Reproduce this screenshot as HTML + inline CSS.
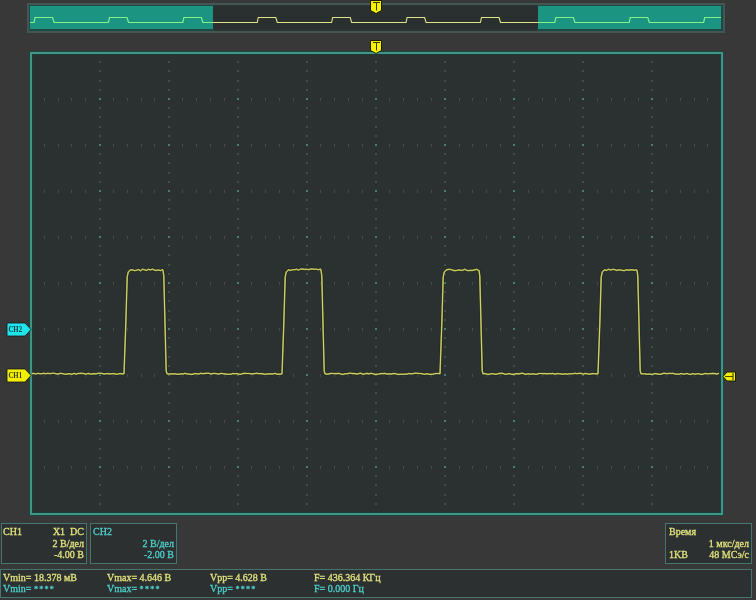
<!DOCTYPE html>
<html><head><meta charset="utf-8"><style>html,body{margin:0;padding:0;background:#393838;width:756px;height:600px;overflow:hidden}svg{display:block;will-change:transform}</style></head>
<body><svg width="756" height="600" viewBox="0 0 756 600" font-family="Liberation Sans, sans-serif"><rect x="0" y="0" width="756" height="600" fill="#393838"/><rect x="27" y="3" width="698" height="30" fill="#445654"/><rect x="29" y="5" width="694" height="26" fill="#2b3434"/><rect x="29" y="5" width="185" height="26" fill="#1d4a45"/><rect x="537" y="5" width="186" height="26" fill="#1d4a45"/><rect x="30" y="6" width="691" height="23" fill="#2a2f2f"/><rect x="30" y="6" width="183" height="23" fill="#1b9482"/><rect x="538" y="6" width="183" height="23" fill="#1b9482"/><clipPath id="cl"><rect x="30" y="6" width="183" height="23"/><rect x="538" y="6" width="183" height="23"/></clipPath><clipPath id="cm"><rect x="213" y="6" width="325" height="23"/></clipPath><path d="M30.0,22.5 L34.0,22.5 L35.1,17.5 L52.6,17.5 L54.1,22.5 L108.4,22.5 L109.5,17.5 L127.0,17.5 L128.5,22.5 L182.8,22.5 L183.9,17.5 L201.4,17.5 L202.9,22.5 L257.2,22.5 L258.3,17.5 L275.8,17.5 L277.3,22.5 L331.6,22.5 L332.7,17.5 L350.2,17.5 L351.7,22.5 L406.0,22.5 L407.1,17.5 L424.6,17.5 L426.1,22.5 L480.4,22.5 L481.5,17.5 L499.0,17.5 L500.5,22.5 L554.8,22.5 L555.9,17.5 L573.4,17.5 L574.9,22.5 L629.2,22.5 L630.3,17.5 L647.8,17.5 L649.3,22.5 L703.6,22.5 L704.7,17.5 L721.0,17.5" fill="none" stroke="#86f08a" stroke-width="1.2" clip-path="url(#cl)"/><path d="M30.0,22.5 L34.0,22.5 L35.1,17.5 L52.6,17.5 L54.1,22.5 L108.4,22.5 L109.5,17.5 L127.0,17.5 L128.5,22.5 L182.8,22.5 L183.9,17.5 L201.4,17.5 L202.9,22.5 L257.2,22.5 L258.3,17.5 L275.8,17.5 L277.3,22.5 L331.6,22.5 L332.7,17.5 L350.2,17.5 L351.7,22.5 L406.0,22.5 L407.1,17.5 L424.6,17.5 L426.1,22.5 L480.4,22.5 L481.5,17.5 L499.0,17.5 L500.5,22.5 L554.8,22.5 L555.9,17.5 L573.4,17.5 L574.9,22.5 L629.2,22.5 L630.3,17.5 L647.8,17.5 L649.3,22.5 L703.6,22.5 L704.7,17.5 L721.0,17.5" fill="none" stroke="#e4e48a" stroke-width="1.1" clip-path="url(#cm)"/><rect x="31" y="53" width="691" height="461" fill="#2b3030" stroke="#3f9686" stroke-width="2"/><rect x="29.5" y="51.5" width="694" height="464" fill="none" stroke="#1e4440" stroke-width="1"/><rect x="32.5" y="54.5" width="688" height="458" fill="none" stroke="#1d3c38" stroke-width="1"/><g fill="#434c4c"><rect x="99" y="61" width="2" height="2"/><rect x="99" y="70" width="2" height="2"/><rect x="99" y="80" width="2" height="2"/><rect x="99" y="89" width="2" height="2"/><rect x="99" y="98" width="2" height="2"/><rect x="99" y="107" width="2" height="2"/><rect x="99" y="116" width="2" height="2"/><rect x="99" y="126" width="2" height="2"/><rect x="99" y="135" width="2" height="2"/><rect x="99" y="144" width="2" height="2"/><rect x="99" y="153" width="2" height="2"/><rect x="99" y="162" width="2" height="2"/><rect x="99" y="172" width="2" height="2"/><rect x="99" y="181" width="2" height="2"/><rect x="99" y="190" width="2" height="2"/><rect x="99" y="199" width="2" height="2"/><rect x="99" y="208" width="2" height="2"/><rect x="99" y="218" width="2" height="2"/><rect x="99" y="227" width="2" height="2"/><rect x="99" y="236" width="2" height="2"/><rect x="99" y="245" width="2" height="2"/><rect x="99" y="254" width="2" height="2"/><rect x="99" y="264" width="2" height="2"/><rect x="99" y="273" width="2" height="2"/><rect x="99" y="282" width="2" height="2"/><rect x="99" y="291" width="2" height="2"/><rect x="99" y="300" width="2" height="2"/><rect x="99" y="310" width="2" height="2"/><rect x="99" y="319" width="2" height="2"/><rect x="99" y="328" width="2" height="2"/><rect x="99" y="337" width="2" height="2"/><rect x="99" y="346" width="2" height="2"/><rect x="99" y="356" width="2" height="2"/><rect x="99" y="365" width="2" height="2"/><rect x="99" y="374" width="2" height="2"/><rect x="99" y="383" width="2" height="2"/><rect x="99" y="392" width="2" height="2"/><rect x="99" y="402" width="2" height="2"/><rect x="99" y="411" width="2" height="2"/><rect x="99" y="420" width="2" height="2"/><rect x="99" y="429" width="2" height="2"/><rect x="99" y="438" width="2" height="2"/><rect x="99" y="448" width="2" height="2"/><rect x="99" y="457" width="2" height="2"/><rect x="99" y="466" width="2" height="2"/><rect x="99" y="475" width="2" height="2"/><rect x="99" y="484" width="2" height="2"/><rect x="99" y="494" width="2" height="2"/><rect x="99" y="503" width="2" height="2"/><rect x="168" y="61" width="2" height="2"/><rect x="168" y="70" width="2" height="2"/><rect x="168" y="80" width="2" height="2"/><rect x="168" y="89" width="2" height="2"/><rect x="168" y="98" width="2" height="2"/><rect x="168" y="107" width="2" height="2"/><rect x="168" y="116" width="2" height="2"/><rect x="168" y="126" width="2" height="2"/><rect x="168" y="135" width="2" height="2"/><rect x="168" y="144" width="2" height="2"/><rect x="168" y="153" width="2" height="2"/><rect x="168" y="162" width="2" height="2"/><rect x="168" y="172" width="2" height="2"/><rect x="168" y="181" width="2" height="2"/><rect x="168" y="190" width="2" height="2"/><rect x="168" y="199" width="2" height="2"/><rect x="168" y="208" width="2" height="2"/><rect x="168" y="218" width="2" height="2"/><rect x="168" y="227" width="2" height="2"/><rect x="168" y="236" width="2" height="2"/><rect x="168" y="245" width="2" height="2"/><rect x="168" y="254" width="2" height="2"/><rect x="168" y="264" width="2" height="2"/><rect x="168" y="273" width="2" height="2"/><rect x="168" y="282" width="2" height="2"/><rect x="168" y="291" width="2" height="2"/><rect x="168" y="300" width="2" height="2"/><rect x="168" y="310" width="2" height="2"/><rect x="168" y="319" width="2" height="2"/><rect x="168" y="328" width="2" height="2"/><rect x="168" y="337" width="2" height="2"/><rect x="168" y="346" width="2" height="2"/><rect x="168" y="356" width="2" height="2"/><rect x="168" y="365" width="2" height="2"/><rect x="168" y="374" width="2" height="2"/><rect x="168" y="383" width="2" height="2"/><rect x="168" y="392" width="2" height="2"/><rect x="168" y="402" width="2" height="2"/><rect x="168" y="411" width="2" height="2"/><rect x="168" y="420" width="2" height="2"/><rect x="168" y="429" width="2" height="2"/><rect x="168" y="438" width="2" height="2"/><rect x="168" y="448" width="2" height="2"/><rect x="168" y="457" width="2" height="2"/><rect x="168" y="466" width="2" height="2"/><rect x="168" y="475" width="2" height="2"/><rect x="168" y="484" width="2" height="2"/><rect x="168" y="494" width="2" height="2"/><rect x="168" y="503" width="2" height="2"/><rect x="237" y="61" width="2" height="2"/><rect x="237" y="70" width="2" height="2"/><rect x="237" y="80" width="2" height="2"/><rect x="237" y="89" width="2" height="2"/><rect x="237" y="98" width="2" height="2"/><rect x="237" y="107" width="2" height="2"/><rect x="237" y="116" width="2" height="2"/><rect x="237" y="126" width="2" height="2"/><rect x="237" y="135" width="2" height="2"/><rect x="237" y="144" width="2" height="2"/><rect x="237" y="153" width="2" height="2"/><rect x="237" y="162" width="2" height="2"/><rect x="237" y="172" width="2" height="2"/><rect x="237" y="181" width="2" height="2"/><rect x="237" y="190" width="2" height="2"/><rect x="237" y="199" width="2" height="2"/><rect x="237" y="208" width="2" height="2"/><rect x="237" y="218" width="2" height="2"/><rect x="237" y="227" width="2" height="2"/><rect x="237" y="236" width="2" height="2"/><rect x="237" y="245" width="2" height="2"/><rect x="237" y="254" width="2" height="2"/><rect x="237" y="264" width="2" height="2"/><rect x="237" y="273" width="2" height="2"/><rect x="237" y="282" width="2" height="2"/><rect x="237" y="291" width="2" height="2"/><rect x="237" y="300" width="2" height="2"/><rect x="237" y="310" width="2" height="2"/><rect x="237" y="319" width="2" height="2"/><rect x="237" y="328" width="2" height="2"/><rect x="237" y="337" width="2" height="2"/><rect x="237" y="346" width="2" height="2"/><rect x="237" y="356" width="2" height="2"/><rect x="237" y="365" width="2" height="2"/><rect x="237" y="374" width="2" height="2"/><rect x="237" y="383" width="2" height="2"/><rect x="237" y="392" width="2" height="2"/><rect x="237" y="402" width="2" height="2"/><rect x="237" y="411" width="2" height="2"/><rect x="237" y="420" width="2" height="2"/><rect x="237" y="429" width="2" height="2"/><rect x="237" y="438" width="2" height="2"/><rect x="237" y="448" width="2" height="2"/><rect x="237" y="457" width="2" height="2"/><rect x="237" y="466" width="2" height="2"/><rect x="237" y="475" width="2" height="2"/><rect x="237" y="484" width="2" height="2"/><rect x="237" y="494" width="2" height="2"/><rect x="237" y="503" width="2" height="2"/><rect x="306" y="61" width="2" height="2"/><rect x="306" y="70" width="2" height="2"/><rect x="306" y="80" width="2" height="2"/><rect x="306" y="89" width="2" height="2"/><rect x="306" y="98" width="2" height="2"/><rect x="306" y="107" width="2" height="2"/><rect x="306" y="116" width="2" height="2"/><rect x="306" y="126" width="2" height="2"/><rect x="306" y="135" width="2" height="2"/><rect x="306" y="144" width="2" height="2"/><rect x="306" y="153" width="2" height="2"/><rect x="306" y="162" width="2" height="2"/><rect x="306" y="172" width="2" height="2"/><rect x="306" y="181" width="2" height="2"/><rect x="306" y="190" width="2" height="2"/><rect x="306" y="199" width="2" height="2"/><rect x="306" y="208" width="2" height="2"/><rect x="306" y="218" width="2" height="2"/><rect x="306" y="227" width="2" height="2"/><rect x="306" y="236" width="2" height="2"/><rect x="306" y="245" width="2" height="2"/><rect x="306" y="254" width="2" height="2"/><rect x="306" y="264" width="2" height="2"/><rect x="306" y="273" width="2" height="2"/><rect x="306" y="282" width="2" height="2"/><rect x="306" y="291" width="2" height="2"/><rect x="306" y="300" width="2" height="2"/><rect x="306" y="310" width="2" height="2"/><rect x="306" y="319" width="2" height="2"/><rect x="306" y="328" width="2" height="2"/><rect x="306" y="337" width="2" height="2"/><rect x="306" y="346" width="2" height="2"/><rect x="306" y="356" width="2" height="2"/><rect x="306" y="365" width="2" height="2"/><rect x="306" y="374" width="2" height="2"/><rect x="306" y="383" width="2" height="2"/><rect x="306" y="392" width="2" height="2"/><rect x="306" y="402" width="2" height="2"/><rect x="306" y="411" width="2" height="2"/><rect x="306" y="420" width="2" height="2"/><rect x="306" y="429" width="2" height="2"/><rect x="306" y="438" width="2" height="2"/><rect x="306" y="448" width="2" height="2"/><rect x="306" y="457" width="2" height="2"/><rect x="306" y="466" width="2" height="2"/><rect x="306" y="475" width="2" height="2"/><rect x="306" y="484" width="2" height="2"/><rect x="306" y="494" width="2" height="2"/><rect x="306" y="503" width="2" height="2"/><rect x="375" y="61" width="2" height="2"/><rect x="375" y="70" width="2" height="2"/><rect x="375" y="80" width="2" height="2"/><rect x="375" y="89" width="2" height="2"/><rect x="375" y="98" width="2" height="2"/><rect x="375" y="107" width="2" height="2"/><rect x="375" y="116" width="2" height="2"/><rect x="375" y="126" width="2" height="2"/><rect x="375" y="135" width="2" height="2"/><rect x="375" y="144" width="2" height="2"/><rect x="375" y="153" width="2" height="2"/><rect x="375" y="162" width="2" height="2"/><rect x="375" y="172" width="2" height="2"/><rect x="375" y="181" width="2" height="2"/><rect x="375" y="190" width="2" height="2"/><rect x="375" y="199" width="2" height="2"/><rect x="375" y="208" width="2" height="2"/><rect x="375" y="218" width="2" height="2"/><rect x="375" y="227" width="2" height="2"/><rect x="375" y="236" width="2" height="2"/><rect x="375" y="245" width="2" height="2"/><rect x="375" y="254" width="2" height="2"/><rect x="375" y="264" width="2" height="2"/><rect x="375" y="273" width="2" height="2"/><rect x="375" y="282" width="2" height="2"/><rect x="375" y="291" width="2" height="2"/><rect x="375" y="300" width="2" height="2"/><rect x="375" y="310" width="2" height="2"/><rect x="375" y="319" width="2" height="2"/><rect x="375" y="328" width="2" height="2"/><rect x="375" y="337" width="2" height="2"/><rect x="375" y="346" width="2" height="2"/><rect x="375" y="356" width="2" height="2"/><rect x="375" y="365" width="2" height="2"/><rect x="375" y="374" width="2" height="2"/><rect x="375" y="383" width="2" height="2"/><rect x="375" y="392" width="2" height="2"/><rect x="375" y="402" width="2" height="2"/><rect x="375" y="411" width="2" height="2"/><rect x="375" y="420" width="2" height="2"/><rect x="375" y="429" width="2" height="2"/><rect x="375" y="438" width="2" height="2"/><rect x="375" y="448" width="2" height="2"/><rect x="375" y="457" width="2" height="2"/><rect x="375" y="466" width="2" height="2"/><rect x="375" y="475" width="2" height="2"/><rect x="375" y="484" width="2" height="2"/><rect x="375" y="494" width="2" height="2"/><rect x="375" y="503" width="2" height="2"/><rect x="444" y="61" width="2" height="2"/><rect x="444" y="70" width="2" height="2"/><rect x="444" y="80" width="2" height="2"/><rect x="444" y="89" width="2" height="2"/><rect x="444" y="98" width="2" height="2"/><rect x="444" y="107" width="2" height="2"/><rect x="444" y="116" width="2" height="2"/><rect x="444" y="126" width="2" height="2"/><rect x="444" y="135" width="2" height="2"/><rect x="444" y="144" width="2" height="2"/><rect x="444" y="153" width="2" height="2"/><rect x="444" y="162" width="2" height="2"/><rect x="444" y="172" width="2" height="2"/><rect x="444" y="181" width="2" height="2"/><rect x="444" y="190" width="2" height="2"/><rect x="444" y="199" width="2" height="2"/><rect x="444" y="208" width="2" height="2"/><rect x="444" y="218" width="2" height="2"/><rect x="444" y="227" width="2" height="2"/><rect x="444" y="236" width="2" height="2"/><rect x="444" y="245" width="2" height="2"/><rect x="444" y="254" width="2" height="2"/><rect x="444" y="264" width="2" height="2"/><rect x="444" y="273" width="2" height="2"/><rect x="444" y="282" width="2" height="2"/><rect x="444" y="291" width="2" height="2"/><rect x="444" y="300" width="2" height="2"/><rect x="444" y="310" width="2" height="2"/><rect x="444" y="319" width="2" height="2"/><rect x="444" y="328" width="2" height="2"/><rect x="444" y="337" width="2" height="2"/><rect x="444" y="346" width="2" height="2"/><rect x="444" y="356" width="2" height="2"/><rect x="444" y="365" width="2" height="2"/><rect x="444" y="374" width="2" height="2"/><rect x="444" y="383" width="2" height="2"/><rect x="444" y="392" width="2" height="2"/><rect x="444" y="402" width="2" height="2"/><rect x="444" y="411" width="2" height="2"/><rect x="444" y="420" width="2" height="2"/><rect x="444" y="429" width="2" height="2"/><rect x="444" y="438" width="2" height="2"/><rect x="444" y="448" width="2" height="2"/><rect x="444" y="457" width="2" height="2"/><rect x="444" y="466" width="2" height="2"/><rect x="444" y="475" width="2" height="2"/><rect x="444" y="484" width="2" height="2"/><rect x="444" y="494" width="2" height="2"/><rect x="444" y="503" width="2" height="2"/><rect x="513" y="61" width="2" height="2"/><rect x="513" y="70" width="2" height="2"/><rect x="513" y="80" width="2" height="2"/><rect x="513" y="89" width="2" height="2"/><rect x="513" y="98" width="2" height="2"/><rect x="513" y="107" width="2" height="2"/><rect x="513" y="116" width="2" height="2"/><rect x="513" y="126" width="2" height="2"/><rect x="513" y="135" width="2" height="2"/><rect x="513" y="144" width="2" height="2"/><rect x="513" y="153" width="2" height="2"/><rect x="513" y="162" width="2" height="2"/><rect x="513" y="172" width="2" height="2"/><rect x="513" y="181" width="2" height="2"/><rect x="513" y="190" width="2" height="2"/><rect x="513" y="199" width="2" height="2"/><rect x="513" y="208" width="2" height="2"/><rect x="513" y="218" width="2" height="2"/><rect x="513" y="227" width="2" height="2"/><rect x="513" y="236" width="2" height="2"/><rect x="513" y="245" width="2" height="2"/><rect x="513" y="254" width="2" height="2"/><rect x="513" y="264" width="2" height="2"/><rect x="513" y="273" width="2" height="2"/><rect x="513" y="282" width="2" height="2"/><rect x="513" y="291" width="2" height="2"/><rect x="513" y="300" width="2" height="2"/><rect x="513" y="310" width="2" height="2"/><rect x="513" y="319" width="2" height="2"/><rect x="513" y="328" width="2" height="2"/><rect x="513" y="337" width="2" height="2"/><rect x="513" y="346" width="2" height="2"/><rect x="513" y="356" width="2" height="2"/><rect x="513" y="365" width="2" height="2"/><rect x="513" y="374" width="2" height="2"/><rect x="513" y="383" width="2" height="2"/><rect x="513" y="392" width="2" height="2"/><rect x="513" y="402" width="2" height="2"/><rect x="513" y="411" width="2" height="2"/><rect x="513" y="420" width="2" height="2"/><rect x="513" y="429" width="2" height="2"/><rect x="513" y="438" width="2" height="2"/><rect x="513" y="448" width="2" height="2"/><rect x="513" y="457" width="2" height="2"/><rect x="513" y="466" width="2" height="2"/><rect x="513" y="475" width="2" height="2"/><rect x="513" y="484" width="2" height="2"/><rect x="513" y="494" width="2" height="2"/><rect x="513" y="503" width="2" height="2"/><rect x="582" y="61" width="2" height="2"/><rect x="582" y="70" width="2" height="2"/><rect x="582" y="80" width="2" height="2"/><rect x="582" y="89" width="2" height="2"/><rect x="582" y="98" width="2" height="2"/><rect x="582" y="107" width="2" height="2"/><rect x="582" y="116" width="2" height="2"/><rect x="582" y="126" width="2" height="2"/><rect x="582" y="135" width="2" height="2"/><rect x="582" y="144" width="2" height="2"/><rect x="582" y="153" width="2" height="2"/><rect x="582" y="162" width="2" height="2"/><rect x="582" y="172" width="2" height="2"/><rect x="582" y="181" width="2" height="2"/><rect x="582" y="190" width="2" height="2"/><rect x="582" y="199" width="2" height="2"/><rect x="582" y="208" width="2" height="2"/><rect x="582" y="218" width="2" height="2"/><rect x="582" y="227" width="2" height="2"/><rect x="582" y="236" width="2" height="2"/><rect x="582" y="245" width="2" height="2"/><rect x="582" y="254" width="2" height="2"/><rect x="582" y="264" width="2" height="2"/><rect x="582" y="273" width="2" height="2"/><rect x="582" y="282" width="2" height="2"/><rect x="582" y="291" width="2" height="2"/><rect x="582" y="300" width="2" height="2"/><rect x="582" y="310" width="2" height="2"/><rect x="582" y="319" width="2" height="2"/><rect x="582" y="328" width="2" height="2"/><rect x="582" y="337" width="2" height="2"/><rect x="582" y="346" width="2" height="2"/><rect x="582" y="356" width="2" height="2"/><rect x="582" y="365" width="2" height="2"/><rect x="582" y="374" width="2" height="2"/><rect x="582" y="383" width="2" height="2"/><rect x="582" y="392" width="2" height="2"/><rect x="582" y="402" width="2" height="2"/><rect x="582" y="411" width="2" height="2"/><rect x="582" y="420" width="2" height="2"/><rect x="582" y="429" width="2" height="2"/><rect x="582" y="438" width="2" height="2"/><rect x="582" y="448" width="2" height="2"/><rect x="582" y="457" width="2" height="2"/><rect x="582" y="466" width="2" height="2"/><rect x="582" y="475" width="2" height="2"/><rect x="582" y="484" width="2" height="2"/><rect x="582" y="494" width="2" height="2"/><rect x="582" y="503" width="2" height="2"/><rect x="651" y="61" width="2" height="2"/><rect x="651" y="70" width="2" height="2"/><rect x="651" y="80" width="2" height="2"/><rect x="651" y="89" width="2" height="2"/><rect x="651" y="98" width="2" height="2"/><rect x="651" y="107" width="2" height="2"/><rect x="651" y="116" width="2" height="2"/><rect x="651" y="126" width="2" height="2"/><rect x="651" y="135" width="2" height="2"/><rect x="651" y="144" width="2" height="2"/><rect x="651" y="153" width="2" height="2"/><rect x="651" y="162" width="2" height="2"/><rect x="651" y="172" width="2" height="2"/><rect x="651" y="181" width="2" height="2"/><rect x="651" y="190" width="2" height="2"/><rect x="651" y="199" width="2" height="2"/><rect x="651" y="208" width="2" height="2"/><rect x="651" y="218" width="2" height="2"/><rect x="651" y="227" width="2" height="2"/><rect x="651" y="236" width="2" height="2"/><rect x="651" y="245" width="2" height="2"/><rect x="651" y="254" width="2" height="2"/><rect x="651" y="264" width="2" height="2"/><rect x="651" y="273" width="2" height="2"/><rect x="651" y="282" width="2" height="2"/><rect x="651" y="291" width="2" height="2"/><rect x="651" y="300" width="2" height="2"/><rect x="651" y="310" width="2" height="2"/><rect x="651" y="319" width="2" height="2"/><rect x="651" y="328" width="2" height="2"/><rect x="651" y="337" width="2" height="2"/><rect x="651" y="346" width="2" height="2"/><rect x="651" y="356" width="2" height="2"/><rect x="651" y="365" width="2" height="2"/><rect x="651" y="374" width="2" height="2"/><rect x="651" y="383" width="2" height="2"/><rect x="651" y="392" width="2" height="2"/><rect x="651" y="402" width="2" height="2"/><rect x="651" y="411" width="2" height="2"/><rect x="651" y="420" width="2" height="2"/><rect x="651" y="429" width="2" height="2"/><rect x="651" y="438" width="2" height="2"/><rect x="651" y="448" width="2" height="2"/><rect x="651" y="457" width="2" height="2"/><rect x="651" y="466" width="2" height="2"/><rect x="651" y="475" width="2" height="2"/><rect x="651" y="484" width="2" height="2"/><rect x="651" y="494" width="2" height="2"/><rect x="651" y="503" width="2" height="2"/><rect x="44" y="98" width="1" height="3"/><rect x="58" y="98" width="1" height="3"/><rect x="71" y="98" width="1" height="3"/><rect x="85" y="98" width="1" height="3"/><rect x="113" y="98" width="1" height="3"/><rect x="127" y="98" width="1" height="3"/><rect x="141" y="98" width="1" height="3"/><rect x="154" y="98" width="1" height="3"/><rect x="182" y="98" width="1" height="3"/><rect x="196" y="98" width="1" height="3"/><rect x="210" y="98" width="1" height="3"/><rect x="224" y="98" width="1" height="3"/><rect x="251" y="98" width="1" height="3"/><rect x="265" y="98" width="1" height="3"/><rect x="279" y="98" width="1" height="3"/><rect x="293" y="98" width="1" height="3"/><rect x="320" y="98" width="1" height="3"/><rect x="334" y="98" width="1" height="3"/><rect x="348" y="98" width="1" height="3"/><rect x="362" y="98" width="1" height="3"/><rect x="389" y="98" width="1" height="3"/><rect x="403" y="98" width="1" height="3"/><rect x="417" y="98" width="1" height="3"/><rect x="431" y="98" width="1" height="3"/><rect x="459" y="98" width="1" height="3"/><rect x="472" y="98" width="1" height="3"/><rect x="486" y="98" width="1" height="3"/><rect x="500" y="98" width="1" height="3"/><rect x="528" y="98" width="1" height="3"/><rect x="542" y="98" width="1" height="3"/><rect x="555" y="98" width="1" height="3"/><rect x="569" y="98" width="1" height="3"/><rect x="597" y="98" width="1" height="3"/><rect x="611" y="98" width="1" height="3"/><rect x="624" y="98" width="1" height="3"/><rect x="638" y="98" width="1" height="3"/><rect x="666" y="98" width="1" height="3"/><rect x="680" y="98" width="1" height="3"/><rect x="694" y="98" width="1" height="3"/><rect x="707" y="98" width="1" height="3"/><rect x="44" y="144" width="1" height="3"/><rect x="58" y="144" width="1" height="3"/><rect x="71" y="144" width="1" height="3"/><rect x="85" y="144" width="1" height="3"/><rect x="113" y="144" width="1" height="3"/><rect x="127" y="144" width="1" height="3"/><rect x="141" y="144" width="1" height="3"/><rect x="154" y="144" width="1" height="3"/><rect x="182" y="144" width="1" height="3"/><rect x="196" y="144" width="1" height="3"/><rect x="210" y="144" width="1" height="3"/><rect x="224" y="144" width="1" height="3"/><rect x="251" y="144" width="1" height="3"/><rect x="265" y="144" width="1" height="3"/><rect x="279" y="144" width="1" height="3"/><rect x="293" y="144" width="1" height="3"/><rect x="320" y="144" width="1" height="3"/><rect x="334" y="144" width="1" height="3"/><rect x="348" y="144" width="1" height="3"/><rect x="362" y="144" width="1" height="3"/><rect x="389" y="144" width="1" height="3"/><rect x="403" y="144" width="1" height="3"/><rect x="417" y="144" width="1" height="3"/><rect x="431" y="144" width="1" height="3"/><rect x="459" y="144" width="1" height="3"/><rect x="472" y="144" width="1" height="3"/><rect x="486" y="144" width="1" height="3"/><rect x="500" y="144" width="1" height="3"/><rect x="528" y="144" width="1" height="3"/><rect x="542" y="144" width="1" height="3"/><rect x="555" y="144" width="1" height="3"/><rect x="569" y="144" width="1" height="3"/><rect x="597" y="144" width="1" height="3"/><rect x="611" y="144" width="1" height="3"/><rect x="624" y="144" width="1" height="3"/><rect x="638" y="144" width="1" height="3"/><rect x="666" y="144" width="1" height="3"/><rect x="680" y="144" width="1" height="3"/><rect x="694" y="144" width="1" height="3"/><rect x="707" y="144" width="1" height="3"/><rect x="44" y="190" width="1" height="3"/><rect x="58" y="190" width="1" height="3"/><rect x="71" y="190" width="1" height="3"/><rect x="85" y="190" width="1" height="3"/><rect x="113" y="190" width="1" height="3"/><rect x="127" y="190" width="1" height="3"/><rect x="141" y="190" width="1" height="3"/><rect x="154" y="190" width="1" height="3"/><rect x="182" y="190" width="1" height="3"/><rect x="196" y="190" width="1" height="3"/><rect x="210" y="190" width="1" height="3"/><rect x="224" y="190" width="1" height="3"/><rect x="251" y="190" width="1" height="3"/><rect x="265" y="190" width="1" height="3"/><rect x="279" y="190" width="1" height="3"/><rect x="293" y="190" width="1" height="3"/><rect x="320" y="190" width="1" height="3"/><rect x="334" y="190" width="1" height="3"/><rect x="348" y="190" width="1" height="3"/><rect x="362" y="190" width="1" height="3"/><rect x="389" y="190" width="1" height="3"/><rect x="403" y="190" width="1" height="3"/><rect x="417" y="190" width="1" height="3"/><rect x="431" y="190" width="1" height="3"/><rect x="459" y="190" width="1" height="3"/><rect x="472" y="190" width="1" height="3"/><rect x="486" y="190" width="1" height="3"/><rect x="500" y="190" width="1" height="3"/><rect x="528" y="190" width="1" height="3"/><rect x="542" y="190" width="1" height="3"/><rect x="555" y="190" width="1" height="3"/><rect x="569" y="190" width="1" height="3"/><rect x="597" y="190" width="1" height="3"/><rect x="611" y="190" width="1" height="3"/><rect x="624" y="190" width="1" height="3"/><rect x="638" y="190" width="1" height="3"/><rect x="666" y="190" width="1" height="3"/><rect x="680" y="190" width="1" height="3"/><rect x="694" y="190" width="1" height="3"/><rect x="707" y="190" width="1" height="3"/><rect x="44" y="236" width="1" height="3"/><rect x="58" y="236" width="1" height="3"/><rect x="71" y="236" width="1" height="3"/><rect x="85" y="236" width="1" height="3"/><rect x="113" y="236" width="1" height="3"/><rect x="127" y="236" width="1" height="3"/><rect x="141" y="236" width="1" height="3"/><rect x="154" y="236" width="1" height="3"/><rect x="182" y="236" width="1" height="3"/><rect x="196" y="236" width="1" height="3"/><rect x="210" y="236" width="1" height="3"/><rect x="224" y="236" width="1" height="3"/><rect x="251" y="236" width="1" height="3"/><rect x="265" y="236" width="1" height="3"/><rect x="279" y="236" width="1" height="3"/><rect x="293" y="236" width="1" height="3"/><rect x="320" y="236" width="1" height="3"/><rect x="334" y="236" width="1" height="3"/><rect x="348" y="236" width="1" height="3"/><rect x="362" y="236" width="1" height="3"/><rect x="389" y="236" width="1" height="3"/><rect x="403" y="236" width="1" height="3"/><rect x="417" y="236" width="1" height="3"/><rect x="431" y="236" width="1" height="3"/><rect x="459" y="236" width="1" height="3"/><rect x="472" y="236" width="1" height="3"/><rect x="486" y="236" width="1" height="3"/><rect x="500" y="236" width="1" height="3"/><rect x="528" y="236" width="1" height="3"/><rect x="542" y="236" width="1" height="3"/><rect x="555" y="236" width="1" height="3"/><rect x="569" y="236" width="1" height="3"/><rect x="597" y="236" width="1" height="3"/><rect x="611" y="236" width="1" height="3"/><rect x="624" y="236" width="1" height="3"/><rect x="638" y="236" width="1" height="3"/><rect x="666" y="236" width="1" height="3"/><rect x="680" y="236" width="1" height="3"/><rect x="694" y="236" width="1" height="3"/><rect x="707" y="236" width="1" height="3"/><rect x="44" y="282" width="1" height="3"/><rect x="58" y="282" width="1" height="3"/><rect x="71" y="282" width="1" height="3"/><rect x="85" y="282" width="1" height="3"/><rect x="113" y="282" width="1" height="3"/><rect x="127" y="282" width="1" height="3"/><rect x="141" y="282" width="1" height="3"/><rect x="154" y="282" width="1" height="3"/><rect x="182" y="282" width="1" height="3"/><rect x="196" y="282" width="1" height="3"/><rect x="210" y="282" width="1" height="3"/><rect x="224" y="282" width="1" height="3"/><rect x="251" y="282" width="1" height="3"/><rect x="265" y="282" width="1" height="3"/><rect x="279" y="282" width="1" height="3"/><rect x="293" y="282" width="1" height="3"/><rect x="320" y="282" width="1" height="3"/><rect x="334" y="282" width="1" height="3"/><rect x="348" y="282" width="1" height="3"/><rect x="362" y="282" width="1" height="3"/><rect x="389" y="282" width="1" height="3"/><rect x="403" y="282" width="1" height="3"/><rect x="417" y="282" width="1" height="3"/><rect x="431" y="282" width="1" height="3"/><rect x="459" y="282" width="1" height="3"/><rect x="472" y="282" width="1" height="3"/><rect x="486" y="282" width="1" height="3"/><rect x="500" y="282" width="1" height="3"/><rect x="528" y="282" width="1" height="3"/><rect x="542" y="282" width="1" height="3"/><rect x="555" y="282" width="1" height="3"/><rect x="569" y="282" width="1" height="3"/><rect x="597" y="282" width="1" height="3"/><rect x="611" y="282" width="1" height="3"/><rect x="624" y="282" width="1" height="3"/><rect x="638" y="282" width="1" height="3"/><rect x="666" y="282" width="1" height="3"/><rect x="680" y="282" width="1" height="3"/><rect x="694" y="282" width="1" height="3"/><rect x="707" y="282" width="1" height="3"/><rect x="44" y="328" width="1" height="3"/><rect x="58" y="328" width="1" height="3"/><rect x="71" y="328" width="1" height="3"/><rect x="85" y="328" width="1" height="3"/><rect x="113" y="328" width="1" height="3"/><rect x="127" y="328" width="1" height="3"/><rect x="141" y="328" width="1" height="3"/><rect x="154" y="328" width="1" height="3"/><rect x="182" y="328" width="1" height="3"/><rect x="196" y="328" width="1" height="3"/><rect x="210" y="328" width="1" height="3"/><rect x="224" y="328" width="1" height="3"/><rect x="251" y="328" width="1" height="3"/><rect x="265" y="328" width="1" height="3"/><rect x="279" y="328" width="1" height="3"/><rect x="293" y="328" width="1" height="3"/><rect x="320" y="328" width="1" height="3"/><rect x="334" y="328" width="1" height="3"/><rect x="348" y="328" width="1" height="3"/><rect x="362" y="328" width="1" height="3"/><rect x="389" y="328" width="1" height="3"/><rect x="403" y="328" width="1" height="3"/><rect x="417" y="328" width="1" height="3"/><rect x="431" y="328" width="1" height="3"/><rect x="459" y="328" width="1" height="3"/><rect x="472" y="328" width="1" height="3"/><rect x="486" y="328" width="1" height="3"/><rect x="500" y="328" width="1" height="3"/><rect x="528" y="328" width="1" height="3"/><rect x="542" y="328" width="1" height="3"/><rect x="555" y="328" width="1" height="3"/><rect x="569" y="328" width="1" height="3"/><rect x="597" y="328" width="1" height="3"/><rect x="611" y="328" width="1" height="3"/><rect x="624" y="328" width="1" height="3"/><rect x="638" y="328" width="1" height="3"/><rect x="666" y="328" width="1" height="3"/><rect x="680" y="328" width="1" height="3"/><rect x="694" y="328" width="1" height="3"/><rect x="707" y="328" width="1" height="3"/><rect x="44" y="374" width="1" height="3"/><rect x="58" y="374" width="1" height="3"/><rect x="71" y="374" width="1" height="3"/><rect x="85" y="374" width="1" height="3"/><rect x="113" y="374" width="1" height="3"/><rect x="127" y="374" width="1" height="3"/><rect x="141" y="374" width="1" height="3"/><rect x="154" y="374" width="1" height="3"/><rect x="182" y="374" width="1" height="3"/><rect x="196" y="374" width="1" height="3"/><rect x="210" y="374" width="1" height="3"/><rect x="224" y="374" width="1" height="3"/><rect x="251" y="374" width="1" height="3"/><rect x="265" y="374" width="1" height="3"/><rect x="279" y="374" width="1" height="3"/><rect x="293" y="374" width="1" height="3"/><rect x="320" y="374" width="1" height="3"/><rect x="334" y="374" width="1" height="3"/><rect x="348" y="374" width="1" height="3"/><rect x="362" y="374" width="1" height="3"/><rect x="389" y="374" width="1" height="3"/><rect x="403" y="374" width="1" height="3"/><rect x="417" y="374" width="1" height="3"/><rect x="431" y="374" width="1" height="3"/><rect x="459" y="374" width="1" height="3"/><rect x="472" y="374" width="1" height="3"/><rect x="486" y="374" width="1" height="3"/><rect x="500" y="374" width="1" height="3"/><rect x="528" y="374" width="1" height="3"/><rect x="542" y="374" width="1" height="3"/><rect x="555" y="374" width="1" height="3"/><rect x="569" y="374" width="1" height="3"/><rect x="597" y="374" width="1" height="3"/><rect x="611" y="374" width="1" height="3"/><rect x="624" y="374" width="1" height="3"/><rect x="638" y="374" width="1" height="3"/><rect x="666" y="374" width="1" height="3"/><rect x="680" y="374" width="1" height="3"/><rect x="694" y="374" width="1" height="3"/><rect x="707" y="374" width="1" height="3"/><rect x="44" y="420" width="1" height="3"/><rect x="58" y="420" width="1" height="3"/><rect x="71" y="420" width="1" height="3"/><rect x="85" y="420" width="1" height="3"/><rect x="113" y="420" width="1" height="3"/><rect x="127" y="420" width="1" height="3"/><rect x="141" y="420" width="1" height="3"/><rect x="154" y="420" width="1" height="3"/><rect x="182" y="420" width="1" height="3"/><rect x="196" y="420" width="1" height="3"/><rect x="210" y="420" width="1" height="3"/><rect x="224" y="420" width="1" height="3"/><rect x="251" y="420" width="1" height="3"/><rect x="265" y="420" width="1" height="3"/><rect x="279" y="420" width="1" height="3"/><rect x="293" y="420" width="1" height="3"/><rect x="320" y="420" width="1" height="3"/><rect x="334" y="420" width="1" height="3"/><rect x="348" y="420" width="1" height="3"/><rect x="362" y="420" width="1" height="3"/><rect x="389" y="420" width="1" height="3"/><rect x="403" y="420" width="1" height="3"/><rect x="417" y="420" width="1" height="3"/><rect x="431" y="420" width="1" height="3"/><rect x="459" y="420" width="1" height="3"/><rect x="472" y="420" width="1" height="3"/><rect x="486" y="420" width="1" height="3"/><rect x="500" y="420" width="1" height="3"/><rect x="528" y="420" width="1" height="3"/><rect x="542" y="420" width="1" height="3"/><rect x="555" y="420" width="1" height="3"/><rect x="569" y="420" width="1" height="3"/><rect x="597" y="420" width="1" height="3"/><rect x="611" y="420" width="1" height="3"/><rect x="624" y="420" width="1" height="3"/><rect x="638" y="420" width="1" height="3"/><rect x="666" y="420" width="1" height="3"/><rect x="680" y="420" width="1" height="3"/><rect x="694" y="420" width="1" height="3"/><rect x="707" y="420" width="1" height="3"/><rect x="44" y="466" width="1" height="3"/><rect x="58" y="466" width="1" height="3"/><rect x="71" y="466" width="1" height="3"/><rect x="85" y="466" width="1" height="3"/><rect x="113" y="466" width="1" height="3"/><rect x="127" y="466" width="1" height="3"/><rect x="141" y="466" width="1" height="3"/><rect x="154" y="466" width="1" height="3"/><rect x="182" y="466" width="1" height="3"/><rect x="196" y="466" width="1" height="3"/><rect x="210" y="466" width="1" height="3"/><rect x="224" y="466" width="1" height="3"/><rect x="251" y="466" width="1" height="3"/><rect x="265" y="466" width="1" height="3"/><rect x="279" y="466" width="1" height="3"/><rect x="293" y="466" width="1" height="3"/><rect x="320" y="466" width="1" height="3"/><rect x="334" y="466" width="1" height="3"/><rect x="348" y="466" width="1" height="3"/><rect x="362" y="466" width="1" height="3"/><rect x="389" y="466" width="1" height="3"/><rect x="403" y="466" width="1" height="3"/><rect x="417" y="466" width="1" height="3"/><rect x="431" y="466" width="1" height="3"/><rect x="459" y="466" width="1" height="3"/><rect x="472" y="466" width="1" height="3"/><rect x="486" y="466" width="1" height="3"/><rect x="500" y="466" width="1" height="3"/><rect x="528" y="466" width="1" height="3"/><rect x="542" y="466" width="1" height="3"/><rect x="555" y="466" width="1" height="3"/><rect x="569" y="466" width="1" height="3"/><rect x="597" y="466" width="1" height="3"/><rect x="611" y="466" width="1" height="3"/><rect x="624" y="466" width="1" height="3"/><rect x="638" y="466" width="1" height="3"/><rect x="666" y="466" width="1" height="3"/><rect x="680" y="466" width="1" height="3"/><rect x="694" y="466" width="1" height="3"/><rect x="707" y="466" width="1" height="3"/></g><g fill="#4c7a74"><rect x="99" y="98" width="2" height="2"/><rect x="168" y="98" width="2" height="2"/><rect x="237" y="98" width="2" height="2"/><rect x="306" y="98" width="2" height="2"/><rect x="375" y="98" width="2" height="2"/><rect x="444" y="98" width="2" height="2"/><rect x="513" y="98" width="2" height="2"/><rect x="582" y="98" width="2" height="2"/><rect x="651" y="98" width="2" height="2"/><rect x="99" y="144" width="2" height="2"/><rect x="168" y="144" width="2" height="2"/><rect x="237" y="144" width="2" height="2"/><rect x="306" y="144" width="2" height="2"/><rect x="375" y="144" width="2" height="2"/><rect x="444" y="144" width="2" height="2"/><rect x="513" y="144" width="2" height="2"/><rect x="582" y="144" width="2" height="2"/><rect x="651" y="144" width="2" height="2"/><rect x="99" y="190" width="2" height="2"/><rect x="168" y="190" width="2" height="2"/><rect x="237" y="190" width="2" height="2"/><rect x="306" y="190" width="2" height="2"/><rect x="375" y="190" width="2" height="2"/><rect x="444" y="190" width="2" height="2"/><rect x="513" y="190" width="2" height="2"/><rect x="582" y="190" width="2" height="2"/><rect x="651" y="190" width="2" height="2"/><rect x="99" y="236" width="2" height="2"/><rect x="168" y="236" width="2" height="2"/><rect x="237" y="236" width="2" height="2"/><rect x="306" y="236" width="2" height="2"/><rect x="375" y="236" width="2" height="2"/><rect x="444" y="236" width="2" height="2"/><rect x="513" y="236" width="2" height="2"/><rect x="582" y="236" width="2" height="2"/><rect x="651" y="236" width="2" height="2"/><rect x="99" y="282" width="2" height="2"/><rect x="168" y="282" width="2" height="2"/><rect x="237" y="282" width="2" height="2"/><rect x="306" y="282" width="2" height="2"/><rect x="375" y="282" width="2" height="2"/><rect x="444" y="282" width="2" height="2"/><rect x="513" y="282" width="2" height="2"/><rect x="582" y="282" width="2" height="2"/><rect x="651" y="282" width="2" height="2"/><rect x="99" y="328" width="2" height="2"/><rect x="168" y="328" width="2" height="2"/><rect x="237" y="328" width="2" height="2"/><rect x="306" y="328" width="2" height="2"/><rect x="375" y="328" width="2" height="2"/><rect x="444" y="328" width="2" height="2"/><rect x="513" y="328" width="2" height="2"/><rect x="582" y="328" width="2" height="2"/><rect x="651" y="328" width="2" height="2"/><rect x="99" y="374" width="2" height="2"/><rect x="168" y="374" width="2" height="2"/><rect x="237" y="374" width="2" height="2"/><rect x="306" y="374" width="2" height="2"/><rect x="375" y="374" width="2" height="2"/><rect x="444" y="374" width="2" height="2"/><rect x="513" y="374" width="2" height="2"/><rect x="582" y="374" width="2" height="2"/><rect x="651" y="374" width="2" height="2"/><rect x="99" y="420" width="2" height="2"/><rect x="168" y="420" width="2" height="2"/><rect x="237" y="420" width="2" height="2"/><rect x="306" y="420" width="2" height="2"/><rect x="375" y="420" width="2" height="2"/><rect x="444" y="420" width="2" height="2"/><rect x="513" y="420" width="2" height="2"/><rect x="582" y="420" width="2" height="2"/><rect x="651" y="420" width="2" height="2"/><rect x="99" y="466" width="2" height="2"/><rect x="168" y="466" width="2" height="2"/><rect x="237" y="466" width="2" height="2"/><rect x="306" y="466" width="2" height="2"/><rect x="375" y="466" width="2" height="2"/><rect x="444" y="466" width="2" height="2"/><rect x="513" y="466" width="2" height="2"/><rect x="582" y="466" width="2" height="2"/><rect x="651" y="466" width="2" height="2"/></g><path d="M32.0,373.6 L34.0,373.4 L36.0,374.0 L38.0,373.3 L40.0,373.8 L42.0,373.6 L44.0,373.3 L46.0,373.8 L48.0,373.2 L50.0,373.7 L52.0,373.3 L54.0,373.3 L56.0,373.7 L58.0,374.2 L60.0,373.3 L62.0,373.5 L64.0,374.0 L66.0,374.3 L68.0,373.9 L70.0,373.7 L72.0,374.4 L74.0,373.3 L76.0,374.2 L78.0,373.5 L80.0,373.4 L82.0,373.3 L84.0,373.6 L86.0,374.2 L88.0,373.4 L90.0,373.9 L92.0,374.0 L94.0,373.6 L96.0,373.9 L98.0,373.3 L100.0,373.3 L102.0,373.4 L104.0,374.0 L106.0,373.7 L108.0,373.6 L110.0,373.9 L112.0,373.7 L114.0,373.6 L116.0,374.2 L118.0,374.0 L120.0,373.5 L122.0,373.9 L124.0,373.8 L125.8,323.8 L127.2,276.9 L128.3,271.9 L130.5,269.9 L132.5,269.9 L134.5,270.6 L136.5,270.3 L138.5,269.5 L140.5,270.8 L142.5,269.2 L144.5,269.8 L146.5,270.4 L148.5,269.3 L150.5,269.9 L152.5,269.1 L154.5,270.2 L156.5,270.4 L158.5,270.0 L160.5,270.6 L162.5,269.6 L163.0,270.4 L163.8,275.9 L165.0,323.8 L166.2,370.8 L167.0,373.8 L169.0,374.0 L171.0,373.9 L173.0,373.9 L175.0,373.7 L177.0,374.2 L179.0,374.3 L181.0,373.8 L183.0,374.0 L185.0,373.3 L187.0,374.0 L189.0,374.0 L191.0,374.4 L193.0,374.2 L195.0,373.5 L197.0,373.7 L199.0,374.0 L201.0,373.2 L203.0,373.8 L205.0,373.4 L207.0,373.3 L209.0,373.3 L211.0,374.1 L213.0,373.4 L215.0,373.5 L217.0,373.7 L219.0,374.2 L221.0,373.3 L223.0,373.7 L225.0,373.9 L227.0,374.3 L229.0,374.2 L231.0,374.2 L233.0,373.5 L235.0,373.7 L237.0,373.6 L239.0,374.3 L241.0,374.3 L243.0,373.4 L245.0,373.4 L247.0,373.5 L249.0,373.5 L251.0,373.8 L253.0,373.9 L255.0,373.5 L257.0,373.2 L259.0,373.7 L261.0,373.6 L263.0,373.9 L265.0,374.3 L267.0,374.0 L269.0,373.8 L271.0,373.9 L273.0,374.0 L275.0,373.3 L277.0,374.3 L279.0,374.1 L281.0,374.2 L282.0,373.8 L283.8,323.8 L285.2,276.9 L286.3,271.9 L288.5,269.9 L290.5,270.4 L292.5,269.7 L294.5,269.7 L296.5,269.2 L298.5,270.1 L300.5,269.1 L302.5,269.1 L304.5,269.4 L306.5,269.3 L308.5,269.6 L310.5,269.1 L312.5,269.0 L314.5,269.3 L316.5,269.2 L318.5,269.7 L320.5,269.0 L321.0,270.4 L321.8,275.9 L323.0,323.8 L324.2,370.8 L325.0,373.8 L327.0,374.2 L329.0,373.9 L331.0,373.4 L333.0,373.5 L335.0,373.6 L337.0,373.6 L339.0,373.3 L341.0,374.2 L343.0,374.4 L345.0,373.8 L347.0,373.8 L349.0,373.3 L351.0,373.3 L353.0,373.6 L355.0,373.5 L357.0,374.2 L359.0,373.4 L361.0,373.2 L363.0,374.3 L365.0,373.8 L367.0,373.4 L369.0,373.9 L371.0,373.2 L373.0,373.8 L375.0,374.4 L377.0,374.2 L379.0,374.0 L381.0,373.5 L383.0,373.6 L385.0,373.4 L387.0,374.1 L389.0,373.8 L391.0,374.1 L393.0,373.6 L395.0,373.5 L397.0,374.2 L399.0,374.4 L401.0,374.2 L403.0,374.2 L405.0,374.2 L407.0,374.1 L409.0,373.5 L411.0,373.8 L413.0,373.6 L415.0,373.2 L417.0,373.2 L419.0,373.5 L421.0,373.5 L423.0,374.0 L425.0,374.3 L427.0,373.7 L429.0,374.3 L431.0,374.4 L433.0,374.3 L435.0,373.6 L437.0,373.5 L439.0,373.5 L440.0,373.8 L441.8,323.8 L443.2,276.9 L444.3,271.9 L446.5,269.9 L448.5,269.4 L450.5,269.4 L452.5,270.1 L454.5,270.6 L456.5,270.5 L458.5,269.9 L460.5,270.2 L462.5,270.4 L464.5,269.2 L466.5,270.2 L468.5,270.6 L470.5,270.4 L472.5,270.4 L474.5,269.9 L476.5,269.3 L478.5,270.4 L479.0,270.4 L479.8,275.9 L481.0,323.8 L482.2,370.8 L483.0,373.8 L485.0,373.6 L487.0,374.2 L489.0,374.4 L491.0,373.7 L493.0,373.7 L495.0,374.3 L497.0,374.1 L499.0,373.4 L501.0,373.4 L503.0,373.4 L505.0,374.3 L507.0,374.2 L509.0,373.4 L511.0,374.2 L513.0,374.4 L515.0,374.0 L517.0,373.6 L519.0,373.9 L521.0,373.4 L523.0,373.2 L525.0,374.4 L527.0,374.0 L529.0,373.8 L531.0,374.3 L533.0,373.7 L535.0,374.2 L537.0,374.2 L539.0,373.5 L541.0,373.5 L543.0,373.6 L545.0,373.5 L547.0,373.9 L549.0,373.5 L551.0,373.7 L553.0,373.4 L555.0,374.3 L557.0,373.6 L559.0,373.7 L561.0,373.9 L563.0,374.3 L565.0,373.7 L567.0,374.3 L569.0,373.8 L571.0,373.8 L573.0,373.8 L575.0,373.2 L577.0,373.7 L579.0,373.4 L581.0,373.2 L583.0,374.2 L585.0,373.4 L587.0,373.8 L589.0,374.1 L591.0,373.9 L593.0,373.6 L595.0,373.8 L597.0,373.9 L598.0,373.8 L599.8,323.8 L601.2,276.9 L602.3,271.9 L604.5,269.9 L606.5,270.4 L608.5,269.2 L610.5,270.0 L612.5,269.4 L614.5,269.5 L616.5,270.4 L618.5,269.9 L620.5,270.0 L622.5,270.4 L624.5,270.6 L626.5,269.8 L628.5,270.1 L630.5,269.9 L632.5,269.9 L634.5,270.2 L636.5,269.8 L637.0,270.4 L637.8,275.9 L639.0,323.8 L640.2,370.8 L641.0,373.8 L643.0,373.8 L645.0,373.8 L647.0,374.3 L649.0,374.0 L651.0,374.3 L653.0,374.3 L655.0,373.5 L657.0,373.9 L659.0,374.3 L661.0,374.2 L663.0,373.4 L665.0,373.3 L667.0,373.7 L669.0,373.3 L671.0,373.5 L673.0,373.3 L675.0,374.0 L677.0,374.1 L679.0,374.3 L681.0,373.4 L683.0,374.1 L685.0,374.0 L687.0,373.4 L689.0,374.3 L691.0,374.4 L693.0,373.5 L695.0,374.3 L697.0,373.7 L699.0,373.8 L701.0,374.4 L703.0,374.2 L705.0,373.4 L707.0,373.7 L709.0,373.8 L711.0,373.6 L713.0,373.4 L715.0,373.6 L717.0,374.1 L719.0,373.2" fill="none" stroke="#1c201c" stroke-width="2.8" stroke-linejoin="round" opacity="0.6"/><path d="M32.0,373.6 L34.0,373.4 L36.0,374.0 L38.0,373.3 L40.0,373.8 L42.0,373.6 L44.0,373.3 L46.0,373.8 L48.0,373.2 L50.0,373.7 L52.0,373.3 L54.0,373.3 L56.0,373.7 L58.0,374.2 L60.0,373.3 L62.0,373.5 L64.0,374.0 L66.0,374.3 L68.0,373.9 L70.0,373.7 L72.0,374.4 L74.0,373.3 L76.0,374.2 L78.0,373.5 L80.0,373.4 L82.0,373.3 L84.0,373.6 L86.0,374.2 L88.0,373.4 L90.0,373.9 L92.0,374.0 L94.0,373.6 L96.0,373.9 L98.0,373.3 L100.0,373.3 L102.0,373.4 L104.0,374.0 L106.0,373.7 L108.0,373.6 L110.0,373.9 L112.0,373.7 L114.0,373.6 L116.0,374.2 L118.0,374.0 L120.0,373.5 L122.0,373.9 L124.0,373.8 L125.8,323.8 L127.2,276.9 L128.3,271.9 L130.5,269.9 L132.5,269.9 L134.5,270.6 L136.5,270.3 L138.5,269.5 L140.5,270.8 L142.5,269.2 L144.5,269.8 L146.5,270.4 L148.5,269.3 L150.5,269.9 L152.5,269.1 L154.5,270.2 L156.5,270.4 L158.5,270.0 L160.5,270.6 L162.5,269.6 L163.0,270.4 L163.8,275.9 L165.0,323.8 L166.2,370.8 L167.0,373.8 L169.0,374.0 L171.0,373.9 L173.0,373.9 L175.0,373.7 L177.0,374.2 L179.0,374.3 L181.0,373.8 L183.0,374.0 L185.0,373.3 L187.0,374.0 L189.0,374.0 L191.0,374.4 L193.0,374.2 L195.0,373.5 L197.0,373.7 L199.0,374.0 L201.0,373.2 L203.0,373.8 L205.0,373.4 L207.0,373.3 L209.0,373.3 L211.0,374.1 L213.0,373.4 L215.0,373.5 L217.0,373.7 L219.0,374.2 L221.0,373.3 L223.0,373.7 L225.0,373.9 L227.0,374.3 L229.0,374.2 L231.0,374.2 L233.0,373.5 L235.0,373.7 L237.0,373.6 L239.0,374.3 L241.0,374.3 L243.0,373.4 L245.0,373.4 L247.0,373.5 L249.0,373.5 L251.0,373.8 L253.0,373.9 L255.0,373.5 L257.0,373.2 L259.0,373.7 L261.0,373.6 L263.0,373.9 L265.0,374.3 L267.0,374.0 L269.0,373.8 L271.0,373.9 L273.0,374.0 L275.0,373.3 L277.0,374.3 L279.0,374.1 L281.0,374.2 L282.0,373.8 L283.8,323.8 L285.2,276.9 L286.3,271.9 L288.5,269.9 L290.5,270.4 L292.5,269.7 L294.5,269.7 L296.5,269.2 L298.5,270.1 L300.5,269.1 L302.5,269.1 L304.5,269.4 L306.5,269.3 L308.5,269.6 L310.5,269.1 L312.5,269.0 L314.5,269.3 L316.5,269.2 L318.5,269.7 L320.5,269.0 L321.0,270.4 L321.8,275.9 L323.0,323.8 L324.2,370.8 L325.0,373.8 L327.0,374.2 L329.0,373.9 L331.0,373.4 L333.0,373.5 L335.0,373.6 L337.0,373.6 L339.0,373.3 L341.0,374.2 L343.0,374.4 L345.0,373.8 L347.0,373.8 L349.0,373.3 L351.0,373.3 L353.0,373.6 L355.0,373.5 L357.0,374.2 L359.0,373.4 L361.0,373.2 L363.0,374.3 L365.0,373.8 L367.0,373.4 L369.0,373.9 L371.0,373.2 L373.0,373.8 L375.0,374.4 L377.0,374.2 L379.0,374.0 L381.0,373.5 L383.0,373.6 L385.0,373.4 L387.0,374.1 L389.0,373.8 L391.0,374.1 L393.0,373.6 L395.0,373.5 L397.0,374.2 L399.0,374.4 L401.0,374.2 L403.0,374.2 L405.0,374.2 L407.0,374.1 L409.0,373.5 L411.0,373.8 L413.0,373.6 L415.0,373.2 L417.0,373.2 L419.0,373.5 L421.0,373.5 L423.0,374.0 L425.0,374.3 L427.0,373.7 L429.0,374.3 L431.0,374.4 L433.0,374.3 L435.0,373.6 L437.0,373.5 L439.0,373.5 L440.0,373.8 L441.8,323.8 L443.2,276.9 L444.3,271.9 L446.5,269.9 L448.5,269.4 L450.5,269.4 L452.5,270.1 L454.5,270.6 L456.5,270.5 L458.5,269.9 L460.5,270.2 L462.5,270.4 L464.5,269.2 L466.5,270.2 L468.5,270.6 L470.5,270.4 L472.5,270.4 L474.5,269.9 L476.5,269.3 L478.5,270.4 L479.0,270.4 L479.8,275.9 L481.0,323.8 L482.2,370.8 L483.0,373.8 L485.0,373.6 L487.0,374.2 L489.0,374.4 L491.0,373.7 L493.0,373.7 L495.0,374.3 L497.0,374.1 L499.0,373.4 L501.0,373.4 L503.0,373.4 L505.0,374.3 L507.0,374.2 L509.0,373.4 L511.0,374.2 L513.0,374.4 L515.0,374.0 L517.0,373.6 L519.0,373.9 L521.0,373.4 L523.0,373.2 L525.0,374.4 L527.0,374.0 L529.0,373.8 L531.0,374.3 L533.0,373.7 L535.0,374.2 L537.0,374.2 L539.0,373.5 L541.0,373.5 L543.0,373.6 L545.0,373.5 L547.0,373.9 L549.0,373.5 L551.0,373.7 L553.0,373.4 L555.0,374.3 L557.0,373.6 L559.0,373.7 L561.0,373.9 L563.0,374.3 L565.0,373.7 L567.0,374.3 L569.0,373.8 L571.0,373.8 L573.0,373.8 L575.0,373.2 L577.0,373.7 L579.0,373.4 L581.0,373.2 L583.0,374.2 L585.0,373.4 L587.0,373.8 L589.0,374.1 L591.0,373.9 L593.0,373.6 L595.0,373.8 L597.0,373.9 L598.0,373.8 L599.8,323.8 L601.2,276.9 L602.3,271.9 L604.5,269.9 L606.5,270.4 L608.5,269.2 L610.5,270.0 L612.5,269.4 L614.5,269.5 L616.5,270.4 L618.5,269.9 L620.5,270.0 L622.5,270.4 L624.5,270.6 L626.5,269.8 L628.5,270.1 L630.5,269.9 L632.5,269.9 L634.5,270.2 L636.5,269.8 L637.0,270.4 L637.8,275.9 L639.0,323.8 L640.2,370.8 L641.0,373.8 L643.0,373.8 L645.0,373.8 L647.0,374.3 L649.0,374.0 L651.0,374.3 L653.0,374.3 L655.0,373.5 L657.0,373.9 L659.0,374.3 L661.0,374.2 L663.0,373.4 L665.0,373.3 L667.0,373.7 L669.0,373.3 L671.0,373.5 L673.0,373.3 L675.0,374.0 L677.0,374.1 L679.0,374.3 L681.0,373.4 L683.0,374.1 L685.0,374.0 L687.0,373.4 L689.0,374.3 L691.0,374.4 L693.0,373.5 L695.0,374.3 L697.0,373.7 L699.0,373.8 L701.0,374.4 L703.0,374.2 L705.0,373.4 L707.0,373.7 L709.0,373.8 L711.0,373.6 L713.0,373.4 L715.0,373.6 L717.0,374.1 L719.0,373.2" fill="none" stroke="#8a9030" stroke-width="1.6" stroke-linejoin="round"/><path d="M32.0,373.6 L34.0,373.4 L36.0,374.0 L38.0,373.3 L40.0,373.8 L42.0,373.6 L44.0,373.3 L46.0,373.8 L48.0,373.2 L50.0,373.7 L52.0,373.3 L54.0,373.3 L56.0,373.7 L58.0,374.2 L60.0,373.3 L62.0,373.5 L64.0,374.0 L66.0,374.3 L68.0,373.9 L70.0,373.7 L72.0,374.4 L74.0,373.3 L76.0,374.2 L78.0,373.5 L80.0,373.4 L82.0,373.3 L84.0,373.6 L86.0,374.2 L88.0,373.4 L90.0,373.9 L92.0,374.0 L94.0,373.6 L96.0,373.9 L98.0,373.3 L100.0,373.3 L102.0,373.4 L104.0,374.0 L106.0,373.7 L108.0,373.6 L110.0,373.9 L112.0,373.7 L114.0,373.6 L116.0,374.2 L118.0,374.0 L120.0,373.5 L122.0,373.9 L124.0,373.8 L125.8,323.8 L127.2,276.9 L128.3,271.9 L130.5,269.9 L132.5,269.9 L134.5,270.6 L136.5,270.3 L138.5,269.5 L140.5,270.8 L142.5,269.2 L144.5,269.8 L146.5,270.4 L148.5,269.3 L150.5,269.9 L152.5,269.1 L154.5,270.2 L156.5,270.4 L158.5,270.0 L160.5,270.6 L162.5,269.6 L163.0,270.4 L163.8,275.9 L165.0,323.8 L166.2,370.8 L167.0,373.8 L169.0,374.0 L171.0,373.9 L173.0,373.9 L175.0,373.7 L177.0,374.2 L179.0,374.3 L181.0,373.8 L183.0,374.0 L185.0,373.3 L187.0,374.0 L189.0,374.0 L191.0,374.4 L193.0,374.2 L195.0,373.5 L197.0,373.7 L199.0,374.0 L201.0,373.2 L203.0,373.8 L205.0,373.4 L207.0,373.3 L209.0,373.3 L211.0,374.1 L213.0,373.4 L215.0,373.5 L217.0,373.7 L219.0,374.2 L221.0,373.3 L223.0,373.7 L225.0,373.9 L227.0,374.3 L229.0,374.2 L231.0,374.2 L233.0,373.5 L235.0,373.7 L237.0,373.6 L239.0,374.3 L241.0,374.3 L243.0,373.4 L245.0,373.4 L247.0,373.5 L249.0,373.5 L251.0,373.8 L253.0,373.9 L255.0,373.5 L257.0,373.2 L259.0,373.7 L261.0,373.6 L263.0,373.9 L265.0,374.3 L267.0,374.0 L269.0,373.8 L271.0,373.9 L273.0,374.0 L275.0,373.3 L277.0,374.3 L279.0,374.1 L281.0,374.2 L282.0,373.8 L283.8,323.8 L285.2,276.9 L286.3,271.9 L288.5,269.9 L290.5,270.4 L292.5,269.7 L294.5,269.7 L296.5,269.2 L298.5,270.1 L300.5,269.1 L302.5,269.1 L304.5,269.4 L306.5,269.3 L308.5,269.6 L310.5,269.1 L312.5,269.0 L314.5,269.3 L316.5,269.2 L318.5,269.7 L320.5,269.0 L321.0,270.4 L321.8,275.9 L323.0,323.8 L324.2,370.8 L325.0,373.8 L327.0,374.2 L329.0,373.9 L331.0,373.4 L333.0,373.5 L335.0,373.6 L337.0,373.6 L339.0,373.3 L341.0,374.2 L343.0,374.4 L345.0,373.8 L347.0,373.8 L349.0,373.3 L351.0,373.3 L353.0,373.6 L355.0,373.5 L357.0,374.2 L359.0,373.4 L361.0,373.2 L363.0,374.3 L365.0,373.8 L367.0,373.4 L369.0,373.9 L371.0,373.2 L373.0,373.8 L375.0,374.4 L377.0,374.2 L379.0,374.0 L381.0,373.5 L383.0,373.6 L385.0,373.4 L387.0,374.1 L389.0,373.8 L391.0,374.1 L393.0,373.6 L395.0,373.5 L397.0,374.2 L399.0,374.4 L401.0,374.2 L403.0,374.2 L405.0,374.2 L407.0,374.1 L409.0,373.5 L411.0,373.8 L413.0,373.6 L415.0,373.2 L417.0,373.2 L419.0,373.5 L421.0,373.5 L423.0,374.0 L425.0,374.3 L427.0,373.7 L429.0,374.3 L431.0,374.4 L433.0,374.3 L435.0,373.6 L437.0,373.5 L439.0,373.5 L440.0,373.8 L441.8,323.8 L443.2,276.9 L444.3,271.9 L446.5,269.9 L448.5,269.4 L450.5,269.4 L452.5,270.1 L454.5,270.6 L456.5,270.5 L458.5,269.9 L460.5,270.2 L462.5,270.4 L464.5,269.2 L466.5,270.2 L468.5,270.6 L470.5,270.4 L472.5,270.4 L474.5,269.9 L476.5,269.3 L478.5,270.4 L479.0,270.4 L479.8,275.9 L481.0,323.8 L482.2,370.8 L483.0,373.8 L485.0,373.6 L487.0,374.2 L489.0,374.4 L491.0,373.7 L493.0,373.7 L495.0,374.3 L497.0,374.1 L499.0,373.4 L501.0,373.4 L503.0,373.4 L505.0,374.3 L507.0,374.2 L509.0,373.4 L511.0,374.2 L513.0,374.4 L515.0,374.0 L517.0,373.6 L519.0,373.9 L521.0,373.4 L523.0,373.2 L525.0,374.4 L527.0,374.0 L529.0,373.8 L531.0,374.3 L533.0,373.7 L535.0,374.2 L537.0,374.2 L539.0,373.5 L541.0,373.5 L543.0,373.6 L545.0,373.5 L547.0,373.9 L549.0,373.5 L551.0,373.7 L553.0,373.4 L555.0,374.3 L557.0,373.6 L559.0,373.7 L561.0,373.9 L563.0,374.3 L565.0,373.7 L567.0,374.3 L569.0,373.8 L571.0,373.8 L573.0,373.8 L575.0,373.2 L577.0,373.7 L579.0,373.4 L581.0,373.2 L583.0,374.2 L585.0,373.4 L587.0,373.8 L589.0,374.1 L591.0,373.9 L593.0,373.6 L595.0,373.8 L597.0,373.9 L598.0,373.8 L599.8,323.8 L601.2,276.9 L602.3,271.9 L604.5,269.9 L606.5,270.4 L608.5,269.2 L610.5,270.0 L612.5,269.4 L614.5,269.5 L616.5,270.4 L618.5,269.9 L620.5,270.0 L622.5,270.4 L624.5,270.6 L626.5,269.8 L628.5,270.1 L630.5,269.9 L632.5,269.9 L634.5,270.2 L636.5,269.8 L637.0,270.4 L637.8,275.9 L639.0,323.8 L640.2,370.8 L641.0,373.8 L643.0,373.8 L645.0,373.8 L647.0,374.3 L649.0,374.0 L651.0,374.3 L653.0,374.3 L655.0,373.5 L657.0,373.9 L659.0,374.3 L661.0,374.2 L663.0,373.4 L665.0,373.3 L667.0,373.7 L669.0,373.3 L671.0,373.5 L673.0,373.3 L675.0,374.0 L677.0,374.1 L679.0,374.3 L681.0,373.4 L683.0,374.1 L685.0,374.0 L687.0,373.4 L689.0,374.3 L691.0,374.4 L693.0,373.5 L695.0,374.3 L697.0,373.7 L699.0,373.8 L701.0,374.4 L703.0,374.2 L705.0,373.4 L707.0,373.7 L709.0,373.8 L711.0,373.6 L713.0,373.4 L715.0,373.6 L717.0,374.1 L719.0,373.2" fill="none" stroke="#dcdc7c" stroke-width="0.9" stroke-linejoin="round"/><path d="M370.5,0.5 h11 v10 l-5.5,3 l-5.5,-3 z" fill="#f4f000" stroke="#1a1a00" stroke-width="1"/><path d="M373,2.5 h7 M376.5,2.5 v8" stroke="#3a3800" stroke-width="1" fill="none"/><path d="M370.5,40.5 h11 v10 l-5.5,3 l-5.5,-3 z" fill="#f4f000" stroke="#1a1a00" stroke-width="1"/><path d="M373,42.5 h7 M376.5,42.5 v8" stroke="#3a3800" stroke-width="1" fill="none"/><path d="M723,376.5 l4,-4.5 h8.5 v9 h-8.5 z" fill="#f4f000" stroke="#1a1a00" stroke-width="1"/><path d="M725,376.5 h8 M733,373 v7" stroke="#4a4800" stroke-width="1.2" fill="none"/><path d="M7,323.0 h18 l6,6.5 l-6,6.5 h-18 z" fill="#1ee4ec" stroke="#161616" stroke-width="0.8"/><text x="8.5" y="332.1" font-family="Liberation Serif" font-weight="bold" font-size="8" fill="#003838" textLength="13.5" lengthAdjust="spacingAndGlyphs">CH2</text><path d="M7,369.0 h18 l6,6.5 l-6,6.5 h-18 z" fill="#f2f000" stroke="#161616" stroke-width="0.8"/><text x="8.5" y="378.1" font-family="Liberation Serif" font-weight="bold" font-size="8" fill="#383800" textLength="13.5" lengthAdjust="spacingAndGlyphs">CH1</text><rect x="1.5" y="523.5" width="85" height="40" fill="#2d3030" stroke="#467570" stroke-width="1"/><rect x="90.5" y="523.5" width="86" height="40" fill="#2d3030" stroke="#467570" stroke-width="1"/><rect x="665.5" y="523.5" width="86" height="40" fill="#2d3030" stroke="#467570" stroke-width="1"/><rect x="0.5" y="569.5" width="751" height="28" fill="#2d3030" stroke="#467570" stroke-width="1"/><g font-family="Liberation Serif" font-size="10" style="white-space:pre"><text x="3" y="535" fill="#dfe27c" stroke="#dfe27c" stroke-width="0.3" text-anchor="start">CH1</text><text x="84" y="535" fill="#dfe27c" stroke="#dfe27c" stroke-width="0.3" text-anchor="end">X1&#160;&#160;DC</text><text x="84" y="546.5" fill="#dfe27c" stroke="#dfe27c" stroke-width="0.3" text-anchor="end">2 В/дел</text><text x="84" y="557.8" fill="#dfe27c" stroke="#dfe27c" stroke-width="0.3" text-anchor="end">-4.00 В</text><text x="93" y="535" fill="#4ccfcc" stroke="#4ccfcc" stroke-width="0.3" text-anchor="start">CH2</text><text x="174" y="546.5" fill="#4ccfcc" stroke="#4ccfcc" stroke-width="0.3" text-anchor="end">2 В/дел</text><text x="174" y="557.8" fill="#4ccfcc" stroke="#4ccfcc" stroke-width="0.3" text-anchor="end">-2.00 В</text><text x="669" y="535" fill="#dfe27c" stroke="#dfe27c" stroke-width="0.3" text-anchor="start">Время</text><text x="749" y="546.5" fill="#dfe27c" stroke="#dfe27c" stroke-width="0.3" text-anchor="end">1 мкс/дел</text><text x="669" y="557.8" fill="#dfe27c" stroke="#dfe27c" stroke-width="0.3" text-anchor="start">1KB</text><text x="749" y="557.8" fill="#dfe27c" stroke="#dfe27c" stroke-width="0.3" text-anchor="end">48 МСэ/с</text><text x="3" y="581" fill="#dfe27c" stroke="#dfe27c" stroke-width="0.3" text-anchor="start">Vmin= 18.378 мВ</text><text x="3" y="592" fill="#4ccfcc" stroke="#4ccfcc" stroke-width="0.3" text-anchor="start">Vmin= <tspan font-size='8' dy='-0.3' letter-spacing='1.3'>****</tspan></text><text x="107" y="581" fill="#dfe27c" stroke="#dfe27c" stroke-width="0.3" text-anchor="start">Vmax= 4.646 В</text><text x="107" y="592" fill="#4ccfcc" stroke="#4ccfcc" stroke-width="0.3" text-anchor="start">Vmax= <tspan font-size='8' dy='-0.3' letter-spacing='1.3'>****</tspan></text><text x="210" y="581" fill="#dfe27c" stroke="#dfe27c" stroke-width="0.3" text-anchor="start">Vpp= 4.628 В</text><text x="210" y="592" fill="#4ccfcc" stroke="#4ccfcc" stroke-width="0.3" text-anchor="start">Vpp= <tspan font-size='8' dy='-0.3' letter-spacing='1.3'>****</tspan></text><text x="314" y="581" fill="#dfe27c" stroke="#dfe27c" stroke-width="0.3" text-anchor="start">F= 436.364 КГц</text><text x="314" y="592" fill="#4ccfcc" stroke="#4ccfcc" stroke-width="0.3" text-anchor="start">F= 0.000 Гц</text></g></svg></body></html>
